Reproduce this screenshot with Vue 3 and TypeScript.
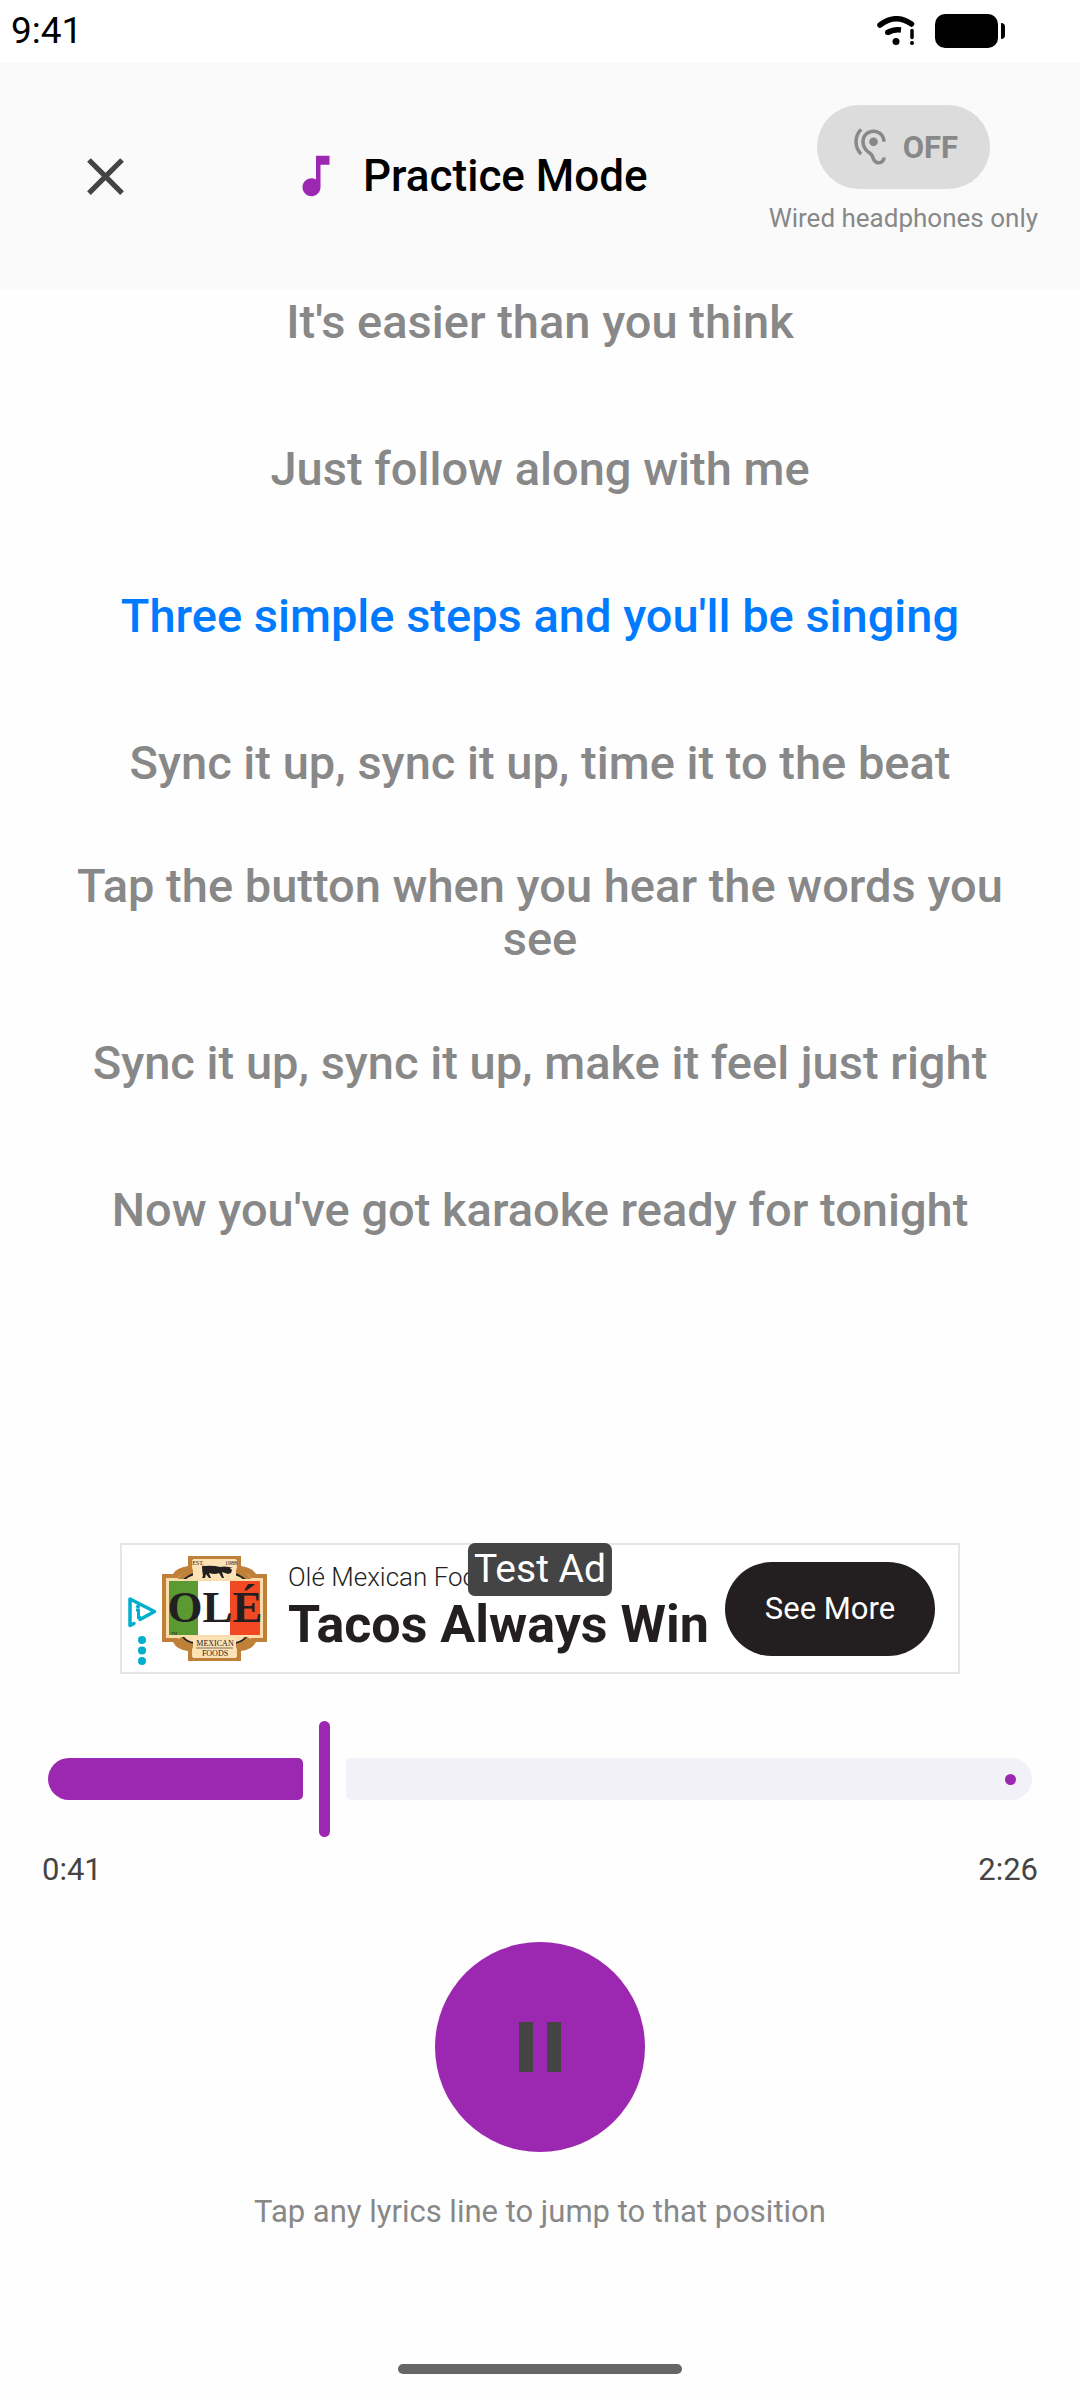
<script setup lang="ts">
import { computed, ref } from 'vue'

interface LyricLine {
  text: string
  at: number
}

const lines: LyricLine[] = [
  { text: "It's easier than you think", at: 28 },
  { text: 'Just follow along with me', at: 34 },
  { text: "Three simple steps and you'll be singing", at: 40 },
  { text: 'Sync it up, sync it up, time it to the beat', at: 47 },
  { text: 'Tap the button when you hear the words you see', at: 54 },
  { text: 'Sync it up, sync it up, make it feel just right', at: 61 },
  { text: "Now you've got karaoke ready for tonight", at: 68 },
]

const duration = 146
const position = ref(41)
const playing = ref(true)
const monitoring = ref(false)

const activeIndex = computed(() => {
  let found = 0
  lines.forEach((line, i) => {
    if (line.at <= position.value) found = i
  })
  return found
})

const playedWidth = computed(() => `calc(${(position.value / duration) * 100}% - 21px)`)

function clock(seconds: number): string {
  return `${Math.floor(seconds / 60)}:${String(seconds % 60).padStart(2, '0')}`
}
</script>

<template>
  <div class="screen">
    <div class="status">
      <span>9:41</span>
      <div class="status-icons">
        <svg width="38" height="30" viewBox="0 0 38 30" aria-hidden="true">
          <g fill="none" stroke="#000" stroke-linecap="round">
            <path d="M3 9Q18.500-3 34.500 8" stroke-width="5.500" />
            <path d="M10 17Q16 13 24 14" stroke-width="5.500" stroke-linecap="butt" />
            <path d="M10.500 16.600h.1" stroke-width="5" />
            <path d="M35 14.500v7" stroke-width="3.500" />
          </g>
          <circle cx="19" cy="25.500" r="3.500" />
          <circle cx="35" cy="27" r="2" />
        </svg>
        <svg width="71" height="34" viewBox="0 0 71 34" aria-hidden="true">
          <rect width="63" height="34" rx="10" />
          <path d="M66 9q4 0 4 4v8q0 4-4 4z" />
        </svg>
      </div>
    </div>

    <header class="bar">
      <button class="close" type="button" aria-label="Close">
        <svg width="63" height="63" viewBox="0 0 24 24" fill="#444">
          <path d="M19 6.410 17.590 5 12 10.590 6.410 5 5 6.410 10.590 12 5 17.590 6.410 19 12 13.410 17.590 19 19 17.590 13.410 12z" />
        </svg>
      </button>
      <h1 class="title">
        <svg width="54" height="54" viewBox="0 0 24 24" fill="#9c27b0" aria-hidden="true">
          <path d="M12 3v10.550c-.59-.34-1.270-.55-2-.55-2.210 0-4 1.790-4 4s1.790 4 4 4 4-1.790 4-4V7h4V3z" />
        </svg>
        Practice Mode
      </h1>
      <div class="monitor">
        <button class="toggle" type="button" :aria-pressed="monitoring" aria-describedby="monitor-note" @click="monitoring = !monitoring">
          <svg width="42" height="42" viewBox="0 0 24 24" fill="#888" aria-hidden="true">
            <path d="M17 20c-.29 0-.56-.06-.76-.15-.71-.37-1.210-.88-1.710-2.380-.51-1.560-1.470-2.290-2.390-3-.79-.61-1.610-1.240-2.320-2.530C9.290 10.980 9 9.930 9 9c0-2.800 2.200-5 5-5s5 2.200 5 5h2c0-3.930-3.070-7-7-7S7 5.070 7 9c0 1.260.38 2.650 1.070 3.900.91 1.650 1.980 2.480 2.850 3.150.81.62 1.390 1.070 1.710 2.050.6 1.820 1.370 2.840 2.730 3.550.51.23 1.070.35 1.640.35 2.210 0 4-1.790 4-4h-2c0 1.100-.9 2-2 2zM7.640 2.640 6.220 1.220C4.230 3.210 3 5.960 3 9s1.230 5.790 3.220 7.780l1.410-1.410C6.010 13.740 5 11.490 5 9s1.010-4.740 2.640-6.360zM11.500 9c0 1.380 1.120 2.500 2.500 2.500s2.500-1.120 2.500-2.500-1.120-2.500-2.500-2.500-2.500 1.120-2.500 2.500z" />
          </svg>
          {{ monitoring ? 'ON' : 'OFF' }}
        </button>
        <span id="monitor-note" class="note">Wired headphones only</span>
      </div>
    </header>

    <main class="lyrics">
      <ol class="lines">
        <li v-for="(line, i) in lines" :key="line.at">
          <button class="line" :class="{ active: i === activeIndex }" type="button" @click="position = line.at">
            {{ line.text }}
          </button>
        </li>
      </ol>
    </main>

    <aside class="ad">
      <svg class="choices" width="30" height="70" viewBox="0 0 30 70" aria-hidden="true">
        <path d="M7 27.500 3 29.500V3L27.500 15.500 13 23.500" fill="none" stroke="#00aecd" stroke-width="3.500" stroke-linejoin="round" stroke-linecap="round" />
        <path d="M9 14h2.500v7.500H14" fill="none" stroke="#00aecd" stroke-width="3" />
        <circle cx="11" cy="10.500" r="2" fill="#00aecd" />
        <g fill="#00aecd">
          <circle cx="15" cy="44" r="4" />
          <circle cx="15" cy="54.500" r="4" />
          <circle cx="15" cy="65" r="4" />
        </g>
      </svg>
      <svg class="logo" width="105" height="105" viewBox="0 0 105 105" role="img" aria-label="Olé Mexican Foods">
        <path d="M26 0h53v10q12 2 15 8h11v68H94q-4 8-15 9v10H26V95q-11-1-15-9H0V18h11q3-6 15-8z" fill="#bf8139" />
        <path d="M30 4h45v10q11 2 14 8h12v60H89q-3 8-14 9v10H30V91q-11-1-14-9H4V22h12q3-6 14-8z" fill="#fbdcab" />
        <path d="M18 24q4-7 13-9M74 15q9 2 13 9M18 82q4 7 13 8M74 90q9-1 13-8" fill="none" stroke="#bf8139" stroke-width="5" />
        <path d="M21 25q4-5 11-7M73 18q7 2 11 7M21 81q4 5 11 6M73 87q7-1 11-6" fill="none" stroke="#231f20" stroke-width="2" />
        <rect x="31" y="3" width="43" height="99" fill="#fde2b5" />
        <rect x="5" y="23" width="95" height="58" fill="#fbdcab" />
        <rect x="7" y="25" width="29" height="54" fill="#5b9a32" />
        <rect x="36" y="25" width="32" height="54" fill="#fff" />
        <rect x="68" y="25" width="30" height="54" fill="#f04923" />
        <path d="M40 10q0 4 1 10l-1 2h3l1-4 3 4h2l-2-5q6 2 10 0l3 5h2l-2-6 6 2 3-1 1-3-2-2h3l-4-1q-5-1-9 0-6-2-17-1z" fill="#231f20" />
        <text class="logo-name" x="53" y="66" fill="#231f20" text-anchor="middle">OLÉ</text>
        <g class="logo-small" fill="#231f20" text-anchor="middle">
          <text x="36" y="9" font-size="6">EST.</text>
          <text x="69" y="9" font-size="6">1988</text>
          <text x="12" y="79" font-size="4">TM</text>
          <text x="53" y="90" font-size="8">MEXICAN</text>
          <text x="53" y="100" font-size="8">FOODS</text>
        </g>
        <path d="M34 92h37" stroke="#231f20" stroke-width=".6" />
      </svg>
      <div class="copy">
        <span class="brand">Olé Mexican Foods</span>
        <strong class="headline">Tacos Always Win</strong>
      </div>
      <a class="cta" href="#">See More</a>
      <span class="test">Test Ad</span>
    </aside>

    <section class="player">
      <div class="slider">
        <span class="played" :style="{ width: playedWidth }"></span>
        <span class="thumb"></span>
        <span class="rest"></span>
        <input v-model.number="position" type="range" min="0" :max="duration" aria-label="Playback position" />
      </div>
      <div class="times">
        <span>{{ clock(position) }}</span>
        <span>{{ clock(duration) }}</span>
      </div>
      <button class="play" type="button" :aria-label="playing ? 'Pause' : 'Play'" @click="playing = !playing">
        <svg width="84" height="84" viewBox="0 0 84 84" fill="#444">
          <path v-if="playing" d="M21 17h14v50H21zM49 17h14v50H49z" />
          <path v-else d="M28 17v50l39-25z" />
        </svg>
      </button>
      <p class="hint">Tap any lyrics line to jump to that position</p>
    </section>

    <div class="home"></div>
  </div>
</template>

<style>
body {
  margin: 0;
  background: #fefefe;
}
</style>

<style scoped>
.screen {
  box-sizing: border-box;
  display: flex;
  flex-direction: column;
  min-height: 100vh;
  padding-bottom: 26px;
  font-family: Roboto, 'Liberation Sans', sans-serif;
  color: #000;
}

button {
  padding: 0;
  border: 0;
  background: none;
  font: inherit;
  color: inherit;
}

svg {
  display: block;
  flex: none;
}

.status {
  box-sizing: border-box;
  display: flex;
  justify-content: space-between;
  align-items: center;
  height: 63px;
  padding: 0 74px 2px 11px;
  background: #fff;
  font-size: 37px;
}

.status-icons {
  display: flex;
  align-items: center;
  gap: 20px;
}

.bar {
  display: flex;
  justify-content: space-between;
  align-items: center;
  padding: 42px;
  background: #fafafa;
}

.close {
  display: grid;
  place-items: center;
  width: 126px;
  height: 126px;
}

.title {
  display: flex;
  align-items: center;
  gap: 20px;
  margin: 0;
  font-size: 44px;
  font-weight: 500;
}

.monitor {
  display: flex;
  flex-direction: column;
  align-items: center;
}

.toggle {
  display: flex;
  align-items: center;
  gap: 12px;
  height: 84px;
  padding: 0 32px;
  border-radius: 42px;
  background: #dcdcdc;
  color: #888;
  font-size: 31px;
  font-weight: 700;
}

.note {
  padding: 8px 0;
  font-size: 26px;
  line-height: 42px;
  color: #888;
}

.lyrics {
  flex: 1 0 auto;
  overflow: hidden;
  padding: 0 63px;
}

/* The list is scrolled a little way under the header. */
.lines {
  display: flex;
  flex-direction: column;
  gap: 21px;
  margin: -31px 0 0;
  padding: 0;
  list-style: none;
}

.line {
  display: block;
  width: 100%;
  min-height: 126px;
  padding: 13px 0;
  font-size: 47px;
  font-weight: 500;
  line-height: 53px;
  color: #888;
}

.line.active {
  color: #007aff;
}

.ad {
  position: relative;
  box-sizing: border-box;
  display: flex;
  align-items: center;
  align-self: center;
  width: 840px;
  max-width: 100%;
  height: 131px;
  margin-bottom: 47px;
  padding: 0 23px 0 5px;
  border: 2px solid #e5e5e5;
  background: #fff;
  color: #231f20;
}

.choices {
  align-self: flex-end;
  margin: 0 5px 6px 0;
}

.logo-name {
  font: 700 45px 'Liberation Serif', serif;
}

.logo-small {
  font-family: 'Liberation Serif', serif;
}

.copy {
  display: flex;
  flex: 1;
  flex-direction: column;
  min-width: 0;
  padding: 0 0 3px 21px;
  white-space: nowrap;
}

.brand {
  font-size: 26px;
  font-weight: 300;
  line-height: 36px;
}

.headline {
  font-size: 52px;
  font-weight: 700;
  line-height: 60px;
}

.cta {
  display: grid;
  place-items: center;
  width: 210px;
  height: 94px;
  border-radius: 47px;
  background: #231f20;
  color: #fff;
  font-size: 31px;
  text-decoration: none;
}

.test {
  position: absolute;
  top: -2px;
  left: 50%;
  padding: 0 6px;
  border-radius: 7px;
  background: #444;
  color: #fff;
  font-size: 39px;
  line-height: 53px;
  white-space: nowrap;
  transform: translateX(-50%);
}

.player {
  display: flex;
  flex-direction: column;
  align-items: center;
}

.slider {
  position: relative;
  box-sizing: border-box;
  display: flex;
  align-items: center;
  gap: 16px;
  width: calc(100% - 96px);
  height: 116px;
}

.slider input {
  position: absolute;
  inset: 0;
  width: 100%;
  height: 100%;
  margin: 0;
  opacity: 0;
}

.played {
  flex: none;
  height: 42px;
  border-radius: 21px 5px 5px 21px;
  background: #9c27b0;
}

.thumb {
  flex: none;
  width: 11px;
  height: 116px;
  border-radius: 6px;
  background: #9c27b0;
}

.rest {
  display: flex;
  flex: 1;
  align-items: center;
  justify-content: flex-end;
  box-sizing: border-box;
  height: 42px;
  padding-right: 16px;
  border-radius: 5px 21px 21px 5px;
  background: #f2f1f7;
}

.rest::after {
  width: 11px;
  height: 11px;
  border-radius: 50%;
  background: #9c27b0;
  content: '';
}

.times {
  box-sizing: border-box;
  display: flex;
  justify-content: space-between;
  width: 100%;
  padding: 12px 42px 0;
  font-size: 31px;
  line-height: 42px;
  color: #444;
}

.play {
  display: grid;
  place-items: center;
  width: 210px;
  height: 210px;
  margin-top: 51px;
  border-radius: 50%;
  background: #9c27b0;
}

.hint {
  margin: 39px 0 0;
  font-size: 31px;
  line-height: 42px;
  color: #888;
}

.home {
  align-self: center;
  width: 284px;
  height: 10px;
  margin-top: 131px;
  border-radius: 5px;
  background: #666;
}
</style>
